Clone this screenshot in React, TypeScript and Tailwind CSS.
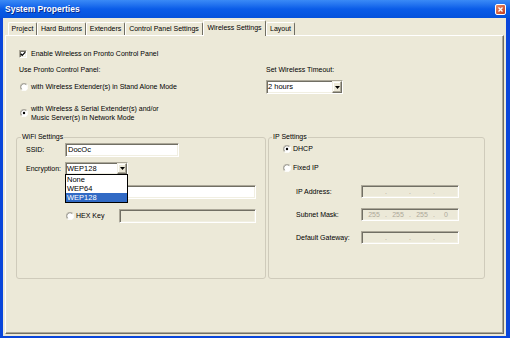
import { Fragment } from 'react';

const sunken =
  'border border-t-[#ACA899] border-l-[#ACA899] border-b-white border-r-white shadow-[inset_1px_1px_0_#716F64,inset_-1px_-1px_0_#F1EFE2]';
const raised =
  'border border-t-[#F1EFE2] border-l-[#F1EFE2] border-b-[#716F64] border-r-[#716F64] shadow-[inset_-1px_-1px_0_#ACA899,inset_1px_1px_0_#fff] bg-[#ECE9D8]';

const tabs = [
  { label: 'Project', width: 'w-[29px]' },
  { label: 'Hard Buttons', width: 'w-[49px]' },
  { label: 'Extenders', width: 'w-[39px]' },
  { label: 'Control Panel Settings', width: 'w-[78px]' },
  { label: 'Wireless Settings', width: 'w-[63px]', active: true },
  { label: 'Layout', width: 'w-[29px]' },
];

function Radio({ checked }: { checked?: boolean }) {
  return (
    <svg width="8" height="8" viewBox="0 0 12 12" className="shrink-0">
      <circle cx="6" cy="6" r="5.5" fill="#fff" />
      <path d="M10.2 1.8A5.5 5.5 0 0 1 1.8 10.2" fill="none" stroke="#fff" />
      <path d="M1.8 10.2A5.5 5.5 0 0 1 10.2 1.8" fill="none" stroke="#ACA899" />
      <path d="M2.6 9.4A4.5 4.5 0 0 1 9.4 2.6" fill="none" stroke="#716F64" />
      {checked && <circle cx="6" cy="6" r="1.8" fill="#000" />}
    </svg>
  );
}

function Checkbox() {
  return (
    <span className={`flex h-[8px] w-[8px] shrink-0 items-center justify-center bg-white ${sunken}`}>
      <svg width="6" height="6" viewBox="0 0 7 7">
        <path d="M0.8 3.2L2.6 5.2L6.2 1.2" fill="none" stroke="#000" strokeWidth="1.4" />
      </svg>
    </span>
  );
}

function ComboButton() {
  return (
    <span className={`flex h-full w-[10px] shrink-0 items-center justify-center ${raised}`}>
      <svg width="5" height="3" viewBox="0 0 5 3">
        <path d="M0 0H5L2.5 3Z" fill="#000" />
      </svg>
    </span>
  );
}

function IpField({ values }: { values?: string[] }) {
  const parts = values ?? ['', '', '', ''];
  return (
    <div className={`flex h-[13px] w-[98px] items-center bg-[#ECE9D8] text-[#ACA899] ${sunken}`}>
      {parts.map((part, i) => (
        <Fragment key={i}>
          {i > 0 && <span className="flex w-0 justify-center">.</span>}
          <span className="flex-1 text-center">{part}</span>
        </Fragment>
      ))}
    </div>
  );
}

function App() {
  return (
    <div className="flex h-[338px] w-[510px] flex-col bg-[#0A46DA] font-['Liberation_Sans',Arial,sans-serif] text-[7px] leading-[8px] text-black">
      {/* title bar */}
      <div className="flex h-[18px] items-center justify-between bg-gradient-to-b from-[#3A8AF6] via-[#0A5CE8] to-[#0552DC] pr-[4px] pl-[5px]">
        <div className="text-[8.5px] font-bold text-white [text-shadow:1px_1px_0_#0A2A8A]">System Properties</div>
        <div className="flex h-[11px] w-[11px] items-center justify-center rounded-[2px] border border-white bg-gradient-to-br from-[#EA8A66] to-[#C23A1C]">
          <svg width="5" height="5" viewBox="0 0 5 5">
            <path d="M0.5 0.5L4.5 4.5M4.5 0.5L0.5 4.5" stroke="#fff" strokeWidth="1.3" />
          </svg>
        </div>
      </div>

      <div className="mr-[4px] mb-[2px] ml-[3px] flex flex-1 flex-col bg-[#ECE9D8]">
        {/* tabs */}
        <div className="flex h-[17px] items-end pl-[5px]">
          {tabs.map(({ label, width, active }) =>
            active ? (
              <div
                key={label}
                className={`relative z-10 -mb-px flex h-[16px] justify-center rounded-t-[2px] border-t border-r border-l border-t-white border-r-[#716F64] border-l-white bg-[#ECE9D8] pt-[3px] whitespace-nowrap ${width}`}
              >
                {label}
              </div>
            ) : (
              <div
                key={label}
                className={`flex h-[13px] items-center justify-center rounded-t-[2px] border-t border-r border-l border-t-white border-r-[#716F64] border-l-white whitespace-nowrap ${width}`}
              >
                {label}
              </div>
            ),
          )}
        </div>

        {/* tab panel */}
        <div className="mx-[2px] mb-[2px] flex-1 border border-t-white border-r-[#716F64] border-b-[#716F64] border-l-white shadow-[inset_-1px_-1px_0_#ACA899]">
          <div className="flex pt-[14px] pl-[13px]">
            <div className="flex w-[247px] flex-col">
              <div className="flex h-[8px] items-center gap-[4px]">
                <Checkbox />
                <span>Enable Wireless on Pronto Control Panel</span>
              </div>
              <div className="mt-[8px] h-[8px]">Use Pronto Control Panel:</div>
              <div className="mt-[6px] flex h-[14px] items-center gap-[3px] pl-[1px]">
                <Radio />
                <span>with Wireless Extender(s) in Stand Alone Mode</span>
              </div>
              <div className="mt-[10px] flex items-center gap-[3px] pl-[1px]">
                <Radio checked />
                <div className="leading-[9px]">
                  <div>with Wireless &amp; Serial Extender(s) and/or</div>
                  <div>Music Server(s) in Network Mode</div>
                </div>
              </div>
            </div>
            <div className="flex flex-col pt-[16px]">
              <div className="h-[8px]">Set Wireless Timeout:</div>
              <div className={`mt-[6px] flex h-[14px] w-[77px] items-center bg-white ${sunken}`}>
                <span className="flex-1 pl-[1px] text-[7.5px]">2 hours</span>
                <ComboButton />
              </div>
            </div>
          </div>

          {/* group boxes */}
          <div className="mt-[11px] flex gap-[2px] pl-[10px]">
            <fieldset className="h-[146px] w-[250px] rounded-[3px] border border-[#CFCBBB]">
              <legend className="ml-[4px] px-[1px] leading-[8px]">WiFi Settings</legend>
              <div className="mt-[2px] flex h-[14px] items-center pl-[9px]">
                <span className="w-[39px]">SSID:</span>
                <div className={`flex h-[14px] w-[114px] items-center bg-white pl-[2px] text-[7.5px] ${sunken}`}>DocOc</div>
              </div>
              <div className="mt-[5px] flex h-[13px] items-center pl-[9px]">
                <span className="w-[39px]">Encryption:</span>
                <div className={`relative flex h-[13px] w-[63px] items-center bg-white ${sunken}`}>
                  <span className="flex-1 pl-[1px] text-[7.5px]">WEP128</span>
                  <ComboButton />
                  <div className="absolute top-full -left-px z-20 w-[63px] border border-black bg-white text-[7.5px] leading-[9px]">
                    <div className="h-[9px] pl-[1px]">None</div>
                    <div className="h-[9px] pl-[1px]">WEP64</div>
                    <div className="h-[9px] bg-[#316AC5] pl-[1px] text-white">WEP128</div>
                  </div>
                </div>
              </div>
              {/* key row hidden behind the open list */}
              <div className="mt-[10px] flex h-[14px] items-center pl-[102px]">
                <div className={`h-[14px] w-[137px] bg-white ${sunken}`} />
              </div>
              <div className="mt-[10px] flex h-[14px] items-center pl-[49px]">
                <div className="flex w-[53px] items-center gap-[2px]">
                  <Radio />
                  <span>HEX Key</span>
                </div>
                <div className={`h-[14px] w-[137px] bg-[#ECE9D8] ${sunken}`} />
              </div>
            </fieldset>

            <fieldset className="h-[146px] w-[217px] rounded-[3px] border border-[#CFCBBB]">
              <legend className="ml-[3px] px-[1px] leading-[8px]">IP Settings</legend>
              <div className="mt-[4px] flex h-[8px] items-center gap-[2px] pl-[14px]">
                <Radio checked />
                <span>DHCP</span>
              </div>
              <div className="mt-[11px] flex h-[8px] items-center gap-[2px] pl-[14px]">
                <Radio />
                <span>Fixed IP</span>
              </div>
              <div className="mt-[13px] flex h-[13px] items-center pl-[27px]">
                <span className="w-[65px]">IP Address:</span>
                <IpField />
              </div>
              <div className="mt-[10px] flex h-[13px] items-center pl-[27px]">
                <span className="w-[65px]">Subnet Mask:</span>
                <IpField values={['255', '255', '255', '0']} />
              </div>
              <div className="mt-[10px] flex h-[13px] items-center pl-[27px]">
                <span className="w-[65px]">Default Gateway:</span>
                <IpField />
              </div>
            </fieldset>
          </div>
        </div>
      </div>
    </div>
  );
}

export default App;
